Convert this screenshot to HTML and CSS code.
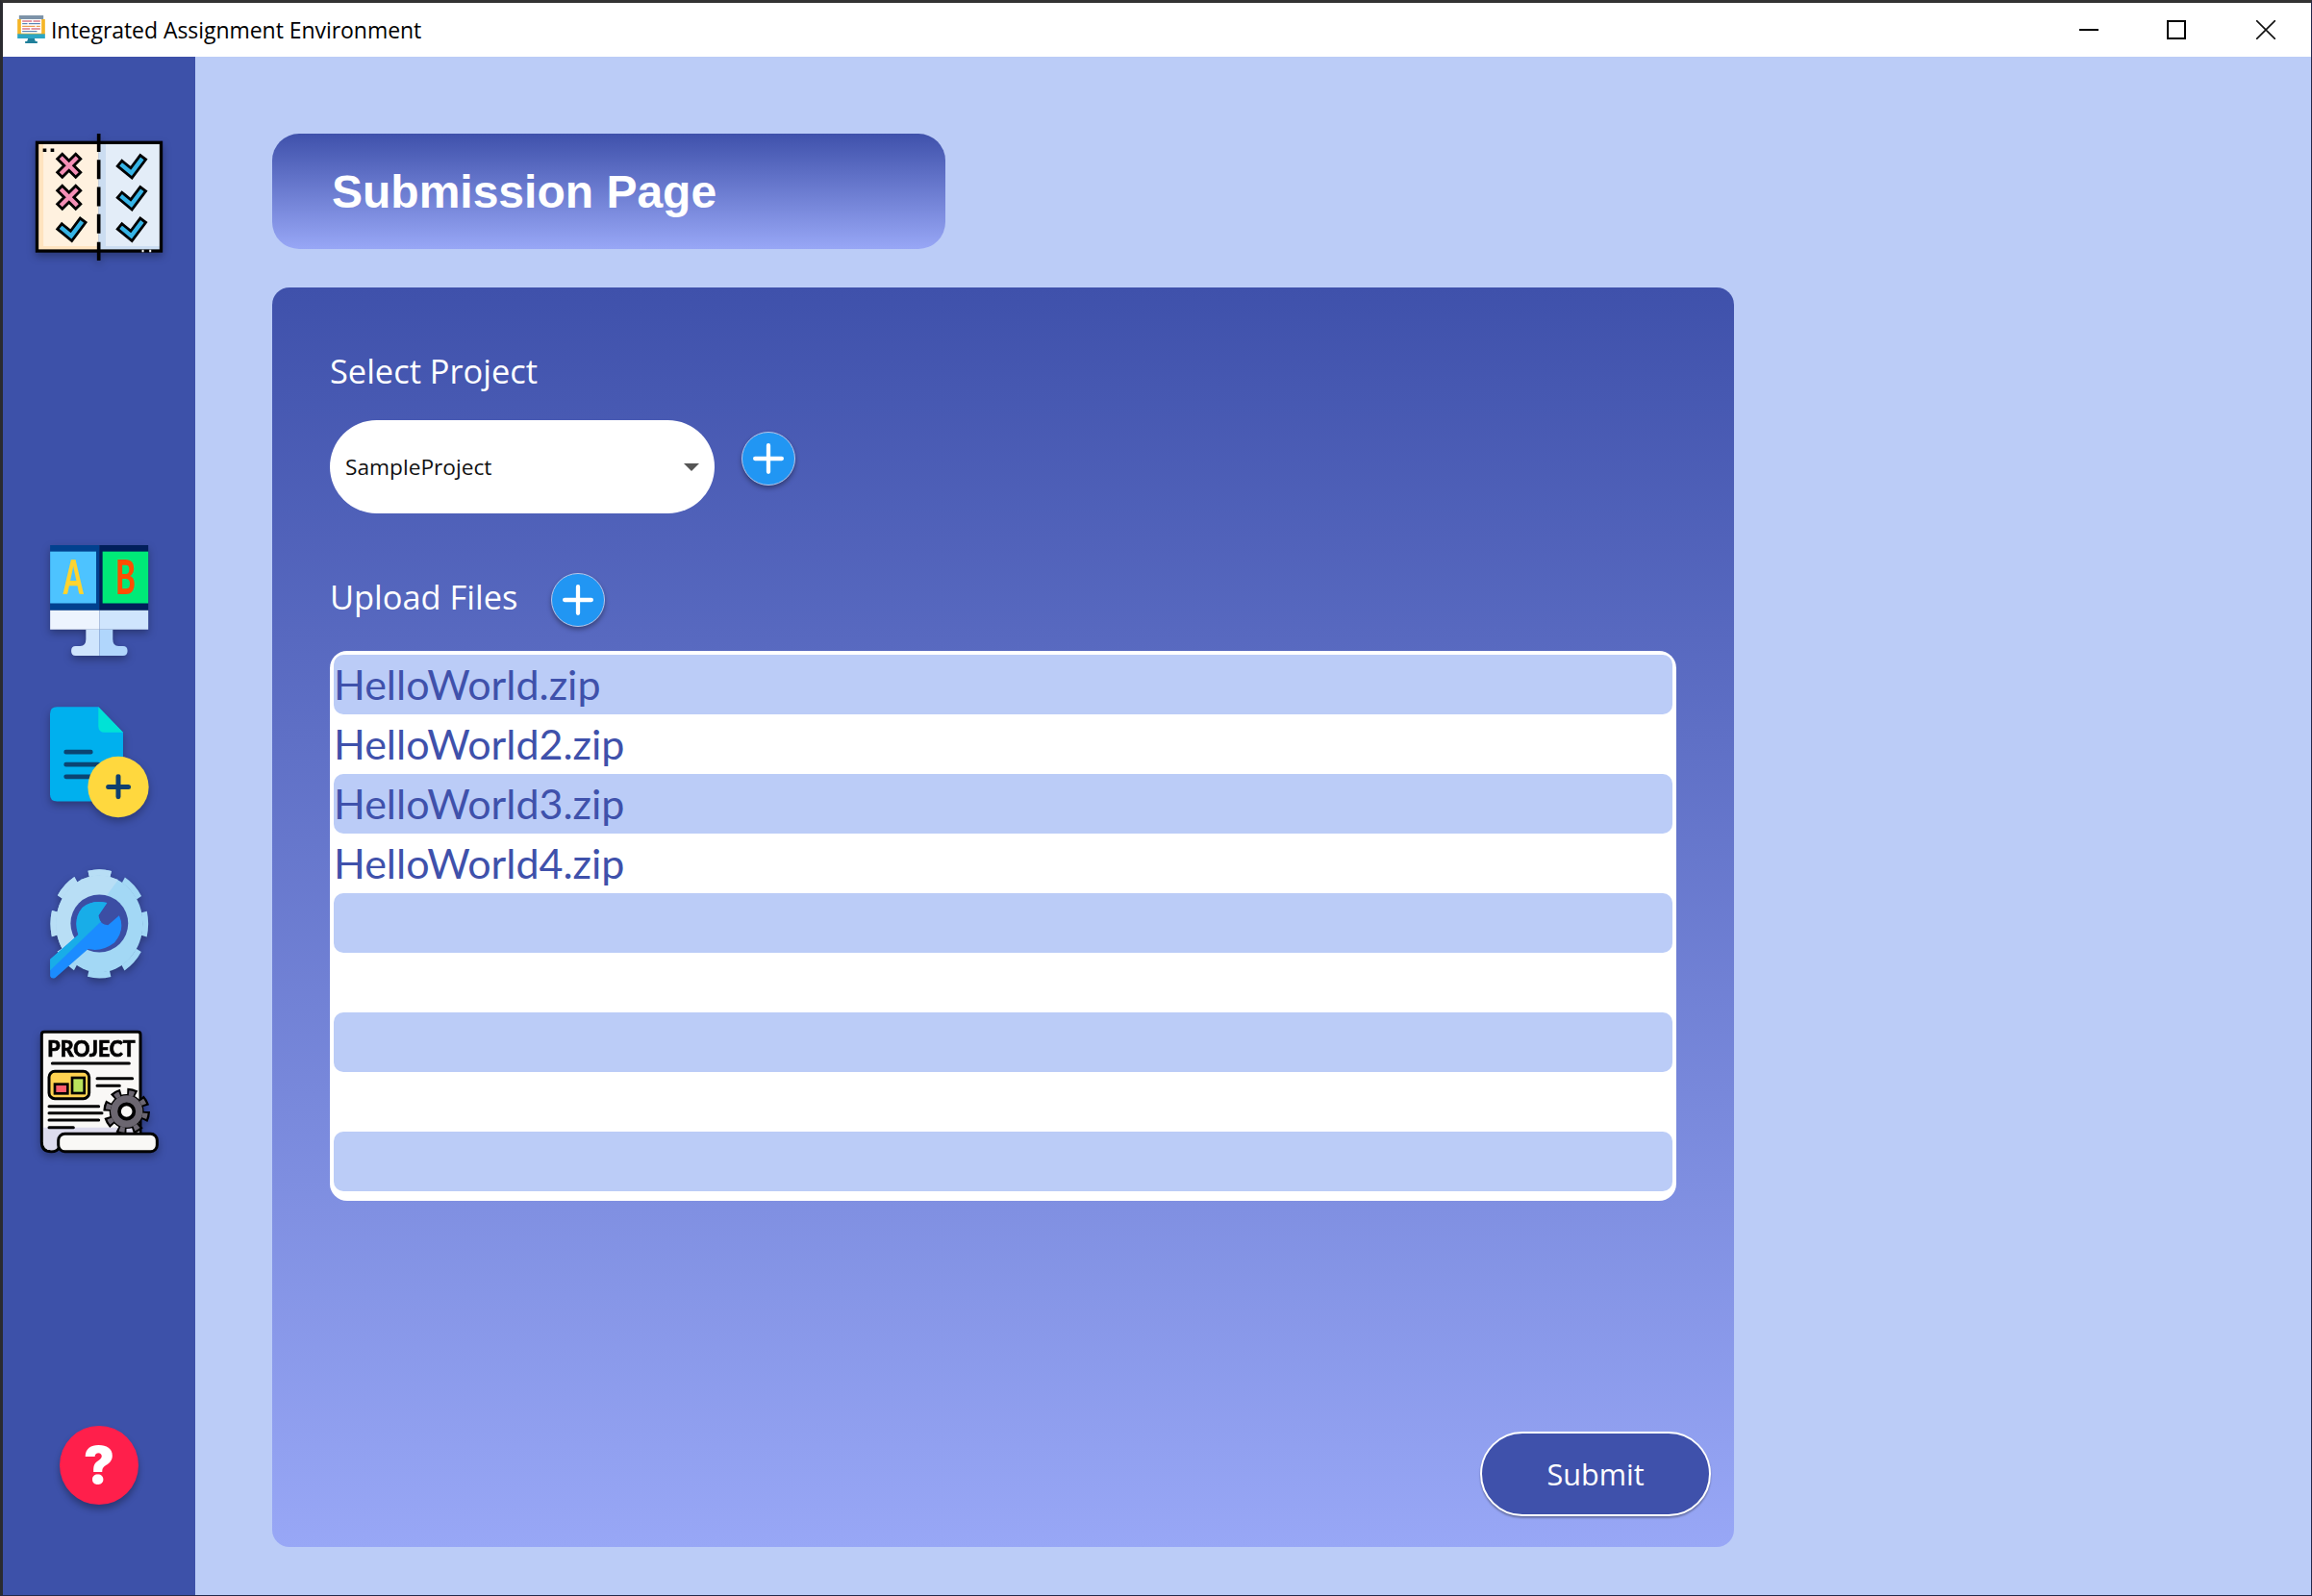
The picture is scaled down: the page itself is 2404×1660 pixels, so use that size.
FILE: index.html
```html
<!DOCTYPE html>
<html lang="en">
<head>
<meta charset="utf-8">
<title>Integrated Assignment Environment</title>
<link rel="stylesheet" href="styles.css">
</head>
<body>
<div class="window">
  <header class="titlebar">
    <svg class="app-icon" viewBox="55 48 86 87" aria-hidden="true">
      <rect x="60" y="48" width="76" height="14" fill="#7d93a8"/>
      <rect x="55" y="60" width="86" height="48" fill="#f5b526"/>
      <rect x="66" y="60" width="64" height="44" fill="#fff"/>
      <path d="M70 66h30M104 66h22" stroke="#c7334a" stroke-width="3"/>
      <path d="M70 74h16M90 74h36" stroke="#3b6fa8" stroke-width="3"/>
      <path d="M70 82h40M114 82h12" stroke="#e58a2e" stroke-width="3"/>
      <path d="M70 90h24M98 90h28" stroke="#c7334a" stroke-width="3"/>
      <path d="M70 98h46" stroke="#3b6fa8" stroke-width="3"/>
      <rect x="55" y="106" width="86" height="14" fill="#2ca6c4"/>
      <path d="M88 120h20l3 9h6v6H79v-6h6z" fill="#1f7f9a"/>
    </svg>
    <span class="app-title">Integrated Assignment Environment</span>
    <div class="window-controls">
      <svg class="win-btn" viewBox="0 0 20 20" aria-hidden="true"><path d="M0 10h20" stroke="#000" stroke-width="2"/></svg>
      <svg class="win-btn" viewBox="0 0 20 20" aria-hidden="true"><rect x="1" y="1" width="18" height="18" fill="none" stroke="#000" stroke-width="2"/></svg>
      <svg class="win-btn win-close" viewBox="0 0 20 20" aria-hidden="true"><path d="M0 0l20 20M20 0L0 20" stroke="#111" stroke-width="1.6"/></svg>
    </div>
  </header>

  <div class="body-row">
    <nav class="sidebar">
      <svg class="nav-icon logo" viewBox="105 418 408 397" aria-hidden="true">
        <rect x="115" y="446" width="193" height="339" fill="#fff1df"/>
        <rect x="308" y="446" width="195" height="339" fill="#e3edf8"/>
        <path d="M115 446h20v324h173v15H115z" fill="#ffe3bf"/>
        <path d="M308 446h22v324h173v15H308z" fill="#cbddf1"/>
        <rect x="115" y="446" width="388" height="339" fill="none" stroke="#000" stroke-width="10"/>
        <path d="M308 418v57M308 500v60M308 585v60M308 670v60M308 757v58" stroke="#000" stroke-width="11"/>
        <path d="M139 470h0M163 470h0" stroke="#000" stroke-width="11" stroke-linecap="square"/>
        <path d="M443 785h6M466 785h6" stroke="#fff" stroke-width="7"/>
        <g fill="none">
          <g stroke="#000" stroke-width="30" stroke-linecap="square">
            <path d="M194 497l42 42M236 497l-42 42"/>
            <path d="M194 596l42 42M236 596l-42 42"/>
            <path d="M382 518l28 23 30-40"/>
            <path d="M382 617l28 23 30-40"/>
            <path d="M382 715l28 23 30-40"/>
            <path d="M194 715l28 23 30-40"/>
          </g>
          <g stroke-width="13" stroke-linecap="square">
            <path d="M194 497l42 42M236 497l-42 42" stroke="#f48fb6"/>
            <path d="M194 596l42 42M236 596l-42 42" stroke="#f48fb6"/>
            <path d="M382 518l28 23 30-40" stroke="#36b4e6"/>
            <path d="M382 617l28 23 30-40" stroke="#36b4e6"/>
            <path d="M382 715l28 23 30-40" stroke="#36b4e6"/>
            <path d="M194 715l28 23 30-40" stroke="#36b4e6"/>
          </g>
        </g>
      </svg>

      <svg class="nav-icon ab" viewBox="94 81 307 346" aria-hidden="true">
        <rect x="94" y="81" width="154" height="204" fill="#01418f"/>
        <rect x="248" y="81" width="153" height="204" fill="#011f5a"/>
        <rect x="94" y="101" width="144" height="162" fill="#4dc3ff"/>
        <rect x="258" y="101" width="143" height="162" fill="#00ea78"/>
        <text class="ab-letter ab-a" x="135" y="234" textLength="63" lengthAdjust="spacingAndGlyphs">A</text>
        <text class="ab-letter ab-b" x="298" y="234" textLength="63" lengthAdjust="spacingAndGlyphs">B</text>
        <rect x="94" y="285" width="154" height="60" fill="#edf4fe"/>
        <rect x="248" y="285" width="153" height="60" fill="#cfe5fd"/>
        <path d="M206 345h42v82h-74q-14 0-14-15t14-15h14q18 0 18-22z" fill="#cfe5fd"/>
        <path d="M290 345h-42v82h74q14 0 14-15t-14-15h-14q-18 0-18-22z" fill="#b0d6fc"/>
      </svg>

      <svg class="nav-icon file" viewBox="94 585 307 347" aria-hidden="true">
        <path d="M116 585h129l77 80v215H116q-22 0-22-22V607q0-22 22-22z" fill="#00b0ee"/>
        <path d="M245 585l77 80h-57q-20 0-20-20z" fill="#00e2d6"/>
        <path d="M144 726h77M144 765h100M144 803h76" stroke="#0b4472" stroke-width="14" stroke-linecap="round"/>
        <circle cx="307" cy="835" r="95" fill="#ffd83e"/>
        <path d="M276 835h63M307 803v63" stroke="#0f3f6f" stroke-width="15" stroke-linecap="round"/>
      </svg>

      <svg class="nav-icon gear" viewBox="94 70 307 346" aria-hidden="true">
        <defs>
          <clipPath id="wrench-top"><path d="M60 420L340 150V40H60z"/></clipPath>
          <clipPath id="gear-top"><path d="M60 40H370L60 420z"/></clipPath>
        </defs>
        <g transform="translate(248 241) scale(1 1.115) translate(-248 -241)">
          <circle cx="248" cy="241" r="136" fill="#a3d8f5"/>
          <circle cx="248" cy="241" r="144" fill="none" stroke="#a3d8f5" stroke-width="18" stroke-dasharray="70 43.1" stroke-dashoffset="35"/>
          <g clip-path="url(#gear-top)">
            <circle cx="248" cy="241" r="136" fill="#b8def5"/>
            <circle cx="248" cy="241" r="144" fill="none" stroke="#b8def5" stroke-width="18" stroke-dasharray="70 43.1" stroke-dashoffset="35"/>
          </g>
        </g>
        <circle cx="248" cy="240" r="90" fill="#3c4ea4"/>
        <path d="M94 352l88-77q-17-50 13-85 30-25 77-15l-27 40q5 30 30 30l35-30q20 45-15 85-40 30-82 20L110 410q-12 5-16-5z" fill="#1b8cff"/>
        <g clip-path="url(#wrench-top)">
          <path d="M94 352l88-77q-17-50 13-85 30-25 77-15l-27 40q5 30 30 30l35-30q20 45-15 85-40 30-82 20L110 410q-12 5-16-5z" fill="#18ade8"/>
        </g>
      </svg>

      <svg class="nav-icon project" viewBox="60 570 378 390" aria-hidden="true">
        <path d="M70 900V585q0-8 8-8h292q8 0 8 8v320H125v30q-5 15-25 15-30 0-30-30z" fill="#f9f8f6" stroke="#000" stroke-width="9"/>
        <path d="M75 875h300v25H125l-4 32q-5 14-22 14-24 0-24-30z" fill="#dedcee"/>
        <text class="project-word" x="88" y="655" textLength="274" lengthAdjust="spacingAndGlyphs">PROJECT</text>
        <path d="M103 675h240M243 722h110M243 745h70M93 809h155M93 830h165M93 852h155M93 875h76" stroke="#000" stroke-width="9" stroke-linecap="round"/>
        <rect x="93" y="700" width="125" height="85" rx="18" fill="#ffd250" stroke="#000" stroke-width="9"/>
        <rect x="111" y="740" width="40" height="29" fill="#ff5d6c" stroke="#000" stroke-width="8"/>
        <rect x="165" y="720" width="38" height="48" fill="#b9e35c" stroke="#000" stroke-width="8"/>
        <circle cx="335" cy="825" r="60" fill="none" stroke="#000" stroke-width="26" stroke-dasharray="28 19.12"/>
        <circle cx="335" cy="825" r="54" fill="#000"/>
        <circle cx="335" cy="825" r="50" fill="#6b6670"/>
        <circle cx="335" cy="825" r="58" fill="none" stroke="#6b6670" stroke-width="16" stroke-dasharray="16 29.55" stroke-dashoffset="-5.5"/>
        <circle cx="335" cy="825" r="23" fill="#f9f8f6" stroke="#000" stroke-width="11"/>
        <rect x="122" y="895" width="308" height="55" rx="20" fill="#f9f8f6" stroke="#000" stroke-width="9"/>
      </svg>

      <div class="help-btn">?</div>
    </nav>

    <main class="content">
      <h1 class="page-title">Submission Page</h1>
      <section class="panel">
        <label class="field-label">Select Project</label>
        <div class="select-row">
          <div class="select-box">
            <span>SampleProject</span>
            <span class="caret"></span>
          </div>
          <button class="add-btn select-add" type="button" aria-label="Add project">
            <svg viewBox="0 0 30 30" aria-hidden="true"><path d="M15 2v26M2 15h26" stroke="#fff" stroke-width="4" stroke-linecap="round"/></svg>
          </button>
        </div>
        <div class="upload-row">
          <label class="field-label upload-label">Upload Files</label>
          <button class="add-btn" type="button" aria-label="Add file">
            <svg viewBox="0 0 30 30" aria-hidden="true"><path d="M15 2v26M2 15h26" stroke="#fff" stroke-width="4" stroke-linecap="round"/></svg>
          </button>
        </div>
        <ul class="file-list">
          <li>HelloWorld.zip</li>
          <li>HelloWorld2.zip</li>
          <li>HelloWorld3.zip</li>
          <li>HelloWorld4.zip</li>
          <li></li>
          <li></li>
          <li></li>
          <li></li>
          <li></li>
        </ul>
        <div class="panel-actions">
          <button class="submit-btn" type="button">Submit</button>
        </div>
      </section>
    </main>
  </div>
</div>
</body>
</html>
```
FILE: styles.css
```css
* { box-sizing: border-box; }

html, body {
  margin: 0;
  height: 100%;
}

body {
  background: #bbccf7;
  font-family: "Open Sans", "Noto Sans", sans-serif;
  overflow: hidden;
}

.window {
  height: 1660px;
  width: 2404px;
  display: flex;
  flex-direction: column;
  border-top: 3px solid #333;
  border-left: 3px solid #2a2b30;
  border-right: 1px solid #23294a;
  border-bottom: 1px solid #23294a;
}

.titlebar {
  height: 56px;
  flex: none;
  background: #fff;
  display: flex;
  align-items: center;
  padding-left: 15px;
}

.app-icon {
  width: 29px;
  height: 29px;
  margin-top: -2px;
  margin-right: 6px;
}

.app-title {
  font-family: "Open Sans", sans-serif;
  font-size: 23px;
  color: #000;
  letter-spacing: -0.05px;
}

.window-controls {
  margin-left: auto;
  display: flex;
  gap: 71px;
  padding-right: 37px;
  margin-top: -1px;
}

.win-btn {
  width: 20px;
  height: 20px;
  display: block;
}

.win-close { margin-left: 2px; }

.body-row {
  flex: 1;
  display: flex;
  min-height: 0;
}

.sidebar {
  width: 200px;
  flex: none;
  background: #3d51a9;
  display: flex;
  flex-direction: column;
  align-items: center;
}

.nav-icon {
  display: block;
  filter: drop-shadow(0 4px 4px rgba(0, 0, 0, 0.3));
  overflow: visible;
}

.logo { width: 136px; height: 132px; margin-top: 80px; }
.ab { width: 102.3px; height: 115px; margin-top: 296px; }
.file { width: 102.3px; height: 116px; margin-top: 53px; }
.gear { width: 102.3px; height: 115px; margin-top: 53px; }
.project { width: 126px; height: 130px; margin-top: 52px; }

.ab-letter { font-family: "Lato", sans-serif; font-weight: 900; font-size: 146px; }
.ab-a { fill: #ffd42e; }
.ab-b { fill: #ff4d00; }

.project-word {
  font-family: "Lato", sans-serif;
  font-weight: 900;
  font-size: 66px;
  fill: #000;
  stroke: #000;
  stroke-width: 2px;
}

.help-btn {
  width: 82px;
  height: 82px;
  margin-top: auto;
  margin-bottom: 94px;
  border-radius: 50%;
  background: #ff1f4b;
  color: #fff;
  font-family: "Inter", "Liberation Sans", sans-serif;
  font-weight: 900;
  font-size: 54px;
  line-height: 82px;
  text-align: center;
  box-shadow: 0 5px 7px rgba(0, 0, 0, 0.3);
}

.content {
  flex: 1;
  padding: 80px 80px 0;
  min-width: 0;
}

.page-title {
  margin: 0;
  width: 700px;
  height: 120px;
  border-radius: 28px;
  padding-left: 62px;
  display: flex;
  align-items: center;
  background: linear-gradient(#3f51ab, #98a7f6);
  color: #fff;
  font-family: "Liberation Sans", Arial, sans-serif;
  font-weight: 700;
  font-size: 48px;
}

.panel {
  width: 1520px;
  height: 1310px;
  margin-top: 40px;
  padding: 64px 60px 0;
  border-radius: 18px;
  background: linear-gradient(#3f51ab, #98a7f6);
  display: flex;
  flex-direction: column;
}

.field-label {
  display: block;
  color: #fff;
  font-family: "Open Sans", sans-serif;
  font-weight: 400;
  font-size: 34.4px;
  line-height: 46px;
}

.select-row {
  display: flex;
  align-items: center;
  margin-top: 28px;
}

.select-box {
  width: 400px;
  height: 97px;
  border-radius: 49px;
  background: #fff;
  display: flex;
  align-items: center;
  justify-content: space-between;
  padding: 0 16px;
  font-family: "Open Sans", sans-serif;
  font-size: 22.7px;
  color: #111;
}

.caret {
  width: 0;
  height: 0;
  border-left: 8px solid transparent;
  border-right: 8px solid transparent;
  border-top: 8px solid #555;
}

.add-btn {
  width: 56px;
  height: 56px;
  border-radius: 50%;
  border: 1.5px solid #b9c6ea;
  background: #2196f3;
  padding: 11px;
  box-shadow: 0 3px 5px rgba(0, 0, 0, 0.35);
  display: block;
}

.add-btn svg { display: block; width: 100%; height: 100%; }

.select-add {
  margin-left: 28px;
  margin-top: -18px;
}

.upload-row {
  display: flex;
  align-items: center;
  gap: 35px;
  margin-top: 62px;
}

.upload-label { margin-bottom: 6px; }

.file-list {
  list-style: none;
  margin: 25px 0 0;
  width: 1400px;
  height: 572px;
  padding: 4px 4px 10px;
  background: #fff;
  border-radius: 18px;
}

.file-list li {
  height: 62px;
  padding-left: 0;
  border-radius: 10px;
  color: #3f51ab;
  font-family: "Lato", sans-serif;
  font-weight: 400;
  font-size: 43px;
  line-height: 61px;
}

.file-list li:nth-child(odd) { background: #bbccf7; }

.panel-actions {
  margin-top: auto;
  margin-bottom: 32px;
  margin-right: -36px;
  display: flex;
  justify-content: flex-end;
}

.submit-btn {
  width: 240px;
  height: 88px;
  border-radius: 44px;
  border: 2px solid #fff;
  background: #3f51ab;
  color: #fff;
  font-family: "Open Sans", sans-serif;
  font-weight: 400;
  font-size: 30.6px;
  box-shadow: 0 2px 2px rgba(0, 0, 0, 0.3);
}
```
